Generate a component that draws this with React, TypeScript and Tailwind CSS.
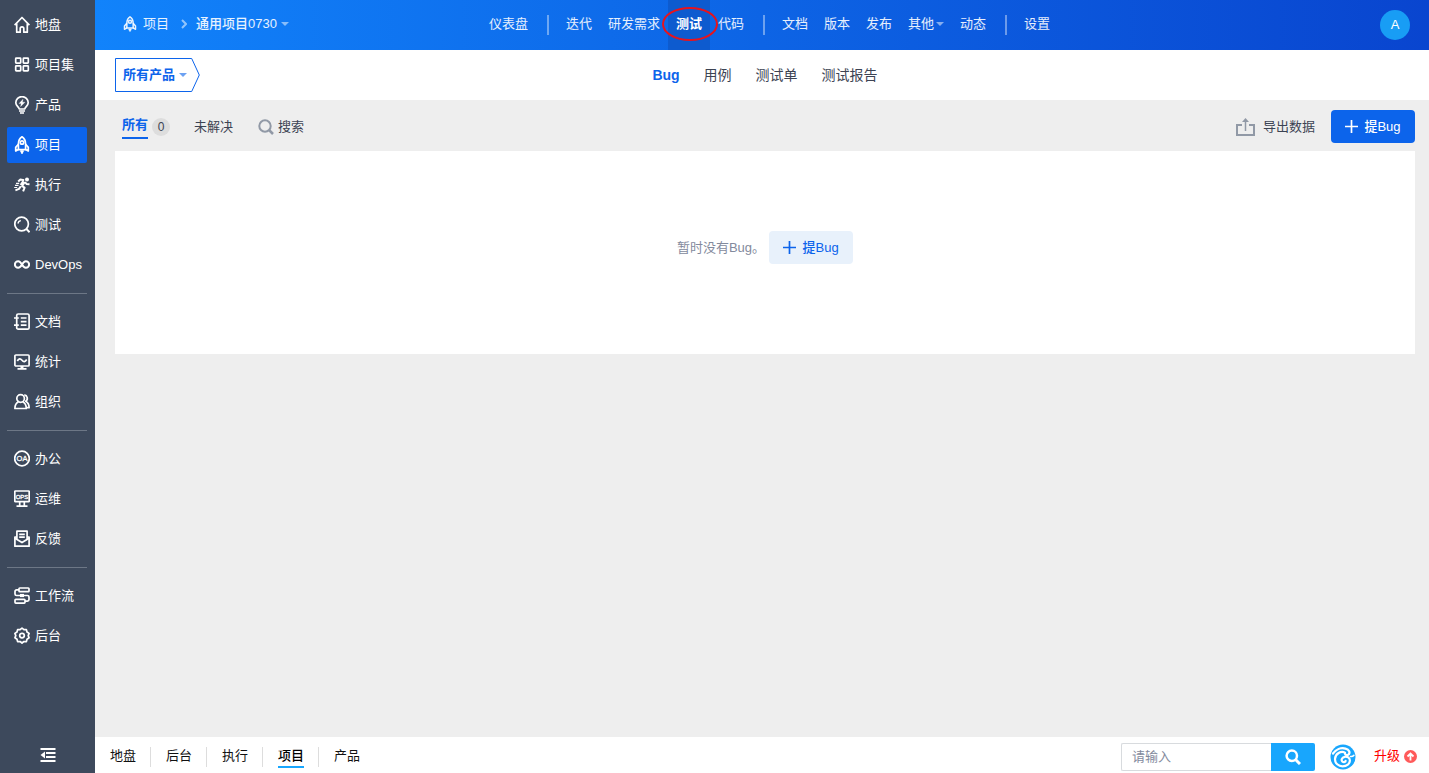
import type { ReactNode } from "react";
import clsx from "clsx";

const icons: Record<string, ReactNode> = {
  home: (
    <>
      <path d="M.6 9.200 8 1.500l7.400 7.700" />
      <path d="M2.700 7.500v8.700h3.500v-3.600a1.800 1.800 0 0 1 3.600 0v3.600h3.500V7.500" />
    </>
  ),
  grid: (
    <>
      <rect x="1.700" y="2.200" width="5" height="5" rx=".6" />
      <rect x="9.300" y="2.200" width="5" height="5" rx=".6" />
      <rect x="1.700" y="9.800" width="5" height="5" rx=".6" />
      <rect x="9.300" y="9.800" width="5" height="5" rx=".6" />
    </>
  ),
  bulb: (
    <>
      <path d="M5.200 13C5 11 1.800 9.900 1.800 6.800a6.200 6.200 0 0 1 12.400 0c0 3.100-3.200 4.200-3.400 6.200z" />
      <path d="M5 15h6M6 17h4" />
      <path d="M9 3.200 5 7.600h2.200l-.6 3L11 6.200H8.500z" fill="currentColor" strokeWidth=".3" />
    </>
  ),
  rocket: (
    <>
      <path d="M8 .8C5.400 2.500 4.400 5 4.400 8v5.600h7.200V8c0-3-1-5.500-3.600-7.200z" />
      <circle cx="8" cy="6.500" r="1.700" />
      <path d="M4.400 8.200 1.700 11.400V15l2.700-1.500M11.600 8.200l2.700 3.200V15l-2.700-1.500" />
      <path d="M6.300 15.300h3.400M8 15v2.700" strokeWidth="1.900" />
    </>
  ),
  run: (
    <>
      <circle cx="13" cy="3.400" r="2" fill="currentColor" stroke="none" />
      <path d="m10 5.500-2.600 4" strokeWidth="3.800" />
      <path d="M10.200 4.200 6.400 3.600 4.200 5.600M11 6l1.500 2 3 .2M7.600 9.800l3 1.800-1.500 3.700M6.800 10.200 5 12.900l-3.600 1.500" strokeWidth="2" />
      <path d="M2 7.300h3.200M1 9.400h3.500M.2 11.500h3" strokeWidth="1.200" />
    </>
  ),
  search: (
    <>
      <circle cx="7.600" cy="8" r="6.800" />
      <path d="m12.200 12.800 3.400 3.400" strokeWidth="2" />
      <path d="M3.900 7.500a3.800 3.800 0 0 1 2.900-3" strokeWidth="1.400" />
    </>
  ),
  infinity: (
    <path
      d="M8 8.500C6.700 6.200 5.700 5.200 4.200 5.200a3.300 3.300 0 0 0 0 6.600c1.500 0 2.500-1 3.800-3.300s2.300-3.300 3.800-3.300a3.300 3.300 0 0 1 0 6.600c-1.500 0-2.500-1-3.800-3.300z"
      strokeWidth="2"
    />
  ),
  doc: (
    <>
      <rect x="2.700" y="1" width="12.400" height="15.200" rx="1.500" />
      <path d="M0 5h4.800M0 12.200h4.800M6.800 5h5.700M6.800 8.600h5.700M6.800 12.200h5.700" />
    </>
  ),
  stat: (
    <>
      <rect x=".9" y="2" width="14.200" height="11" rx="1" />
      <path d="M3.300 8c1.600-2.600 3.100-2.600 4.700-.7s3.100 1.700 4.700-.8M3.500 15.800h9" />
      <path d="M8 13v2.500" strokeWidth="3" />
    </>
  ),
  org: (
    <>
      <circle cx="6.600" cy="5.500" r="3.800" />
      <path d="M4.500 8.800C2.100 10 .9 12.200.9 15.500h11.400c0-3.300-1.200-5.500-3.600-6.700" />
      <path d="M10.300 1.900a3.500 3.500 0 0 1 1.400 6.400c2.200 1.200 3.400 3.300 3.400 6.400H13" />
    </>
  ),
  oa: (
    <>
      <circle cx="8" cy="8.500" r="7.300" />
      <text x="8" y="11.200" textAnchor="middle" fontSize="7.500" fill="currentColor" stroke="currentColor" strokeWidth=".3">OA</text>
    </>
  ),
  ops: (
    <>
      <rect x=".8" y="1" width="14.400" height="10.600" rx=".6" />
      <path d="M5.700 12v4M10.300 12v4M2.500 16.200h11" />
      <text x="8" y="8.800" textAnchor="middle" fontSize="6" fill="currentColor" stroke="currentColor" strokeWidth=".3">OPS</text>
    </>
  ),
  feedback: (
    <>
      <path d="M2.900 7H.9v9.200h14.200V7h-2" />
      <path d="M2.900 9.400V1.200h10.200v8.200M.9 8.300 8 12.600l7.100-4.300M5.200 4.300h5.600M5.200 7.200h5.600" />
    </>
  ),
  flow: (
    <>
      <rect x="5" y="1" width="10" height="3.700" rx=".8" />
      <rect x="1" y="12.400" width="10" height="3.700" rx=".8" />
      <path d="M5 2.900H2.600A1.600 1.600 0 0 0 1 4.500v2.400a1.600 1.600 0 0 0 1.600 1.600h10.800a1.600 1.600 0 0 1 1.600 1.600v2.500a1.600 1.600 0 0 1-1.600 1.600H11" />
      <path d="M6 8.500h4" strokeWidth="3.200" />
    </>
  ),
  gear: (
    <>
      <path d="m8 1.100 1.900 1.600 2.500-.1.600 2.400 2.100 1.400-.9 2.200.9 2.200-2.100 1.400-.6 2.400-2.500-.1L8 16l-1.900-1.500-2.500.1-.6-2.400-2.100-1.400.9-2.200-.9-2.200L3 5l.6-2.400 2.500.1z" />
      <circle cx="8" cy="8.600" r="2.300" />
    </>
  ),
};

function Icon({ name, className }: { name: string; className?: string }) {
  return (
    <svg
      viewBox="0 0 16 18"
      className={clsx("shrink-0", className ?? "h-[18px] w-4")}
      fill="none"
      stroke="currentColor"
      strokeWidth="1.700"
      strokeLinejoin="round"
      aria-hidden="true"
    >
      {icons[name]}
    </svg>
  );
}

const sideGroups = [
  [
    ["home", "地盘"],
    ["grid", "项目集"],
    ["bulb", "产品"],
    ["rocket", "项目"],
    ["run", "执行"],
    ["search", "测试"],
    ["infinity", "DevOps"],
  ],
  [
    ["doc", "文档"],
    ["stat", "统计"],
    ["org", "组织"],
  ],
  [
    ["oa", "办公"],
    ["ops", "运维"],
    ["feedback", "反馈"],
  ],
  [
    ["flow", "工作流"],
    ["gear", "后台"],
  ],
];

const navGroups = [
  ["仪表盘"],
  ["迭代", "研发需求", "测试", "代码"],
  ["文档", "版本", "发布", "其他", "动态"],
  ["设置"],
];

const subTabs = ["Bug", "用例", "测试单", "测试报告"];
const openedApps = ["地盘", "后台", "执行", "项目", "产品"];

function Caret({ className }: { className?: string }) {
  return (
    <svg viewBox="0 0 8 4" className={clsx("h-1 w-2 shrink-0", className)} fill="currentColor" aria-hidden="true">
      <path d="M0 0h8L4 4z" />
    </svg>
  );
}

function Plus() {
  return (
    <svg viewBox="0 0 13 13" className="h-[13px] w-[13px]" stroke="currentColor" strokeWidth="1.700" aria-hidden="true">
      <path d="M6.500 0v13M0 6.500h13" />
    </svg>
  );
}

function Sidebar() {
  return (
    <aside className="flex w-[95px] shrink-0 flex-col bg-[#3d495c] pt-[7px] text-white">
      <nav className="flex-1 pr-2 pl-[7px]">
        {sideGroups.map((group, i) => (
          <ul
            key={i}
            className={clsx("flex flex-col gap-1", i > 0 && "mt-[10px] border-t border-[#6d7786] pt-[10px]")}
          >
            {group.map(([icon, label]) => (
              <li key={label}>
                <a
                  href="#"
                  className={clsx(
                    "flex h-9 items-center gap-[5px] rounded-xs pl-[7px] whitespace-nowrap",
                    label === "项目" && "bg-[#0c64eb]",
                  )}
                >
                  <Icon name={icon} />
                  <span className="pb-px">{label}</span>
                </a>
              </li>
            ))}
          </ul>
        ))}
      </nav>
      <button type="button" aria-label="收起菜单" className="flex h-9 items-center justify-center">
        <svg viewBox="0 0 16 14" className="h-[14px] w-4" fill="none" stroke="currentColor" strokeWidth="2">
          <path d="M.5 1h15M6 5h9.500M6 9h9.500M.5 13h15" />
          <path d="M5 3.500v7L.5 7z" fill="currentColor" stroke="none" />
        </svg>
      </button>
    </aside>
  );
}

function Header() {
  return (
    <header className="flex h-[50px] items-center bg-linear-to-r/srgb from-[#1183fb] to-[#0945cf] pr-[13px] pl-7 text-white/90">
      <div className="flex flex-1 items-center pb-0.5 whitespace-nowrap">
        <a href="#" className="flex items-center gap-1.5">
          <Icon name="rocket" className="h-4 w-[14px]" />
          项目
        </a>
        <svg viewBox="0 0 6 10" className="mr-[9px] ml-3 h-[10px] w-1.5 opacity-60" fill="none" stroke="currentColor" strokeWidth="2">
          <path d="m1 1 4 4-4 4" />
        </svg>
        <button type="button" className="flex items-center gap-1 font-medium">
          通用项目0730
          <Caret className="text-white/50" />
        </button>
      </div>
      <nav className="flex items-center whitespace-nowrap">
        {navGroups.map((group, i) => (
          <div key={i} className="flex items-center">
            {i > 0 && <span className="mr-[9px] ml-[11px] h-5 w-0.5 bg-white/40" />}
            {group.map((label) => (
              <a
                key={label}
                href="#"
                className={clsx(
                  "relative flex h-[50px] items-center px-2 pb-0.5",
                  label === "测试" && "z-10 bg-[#0d5bcf] font-bold text-white",
                )}
              >
                {label}
                {label === "其他" && <Caret className="ml-0.5 text-white/50" />}
                {label === "测试" && (
                  <svg
                    viewBox="0 0 56 34"
                    className="pointer-events-none absolute top-[7px] -left-[6px] h-[34px] w-14"
                    fill="none"
                    stroke="#e8131c"
                    strokeWidth="2"
                  >
                    <ellipse cx="28" cy="17" rx="27" ry="16" />
                  </svg>
                )}
              </a>
            ))}
          </div>
        ))}
      </nav>
      <div className="flex flex-1 justify-end">
        <button type="button" className="mr-1.5 h-[30px] w-[30px] rounded-full bg-[#189df5] text-white">
          A
        </button>
      </div>
    </header>
  );
}

function SubNav() {
  return (
    <div className="flex h-[50px] items-center bg-white pr-[14px] pl-5">
      <div className="flex-1">
        <button
          type="button"
          className="relative flex h-[34px] w-[85px] items-center gap-1 pb-px pl-2 font-bold whitespace-nowrap text-[#0c64eb]"
        >
          <svg viewBox="0 0 85 34" className="absolute inset-0 h-full w-full" fill="none" stroke="currentColor">
            <path d="M.5.5h76.200L84.300 17l-7.600 16.500H.5z" />
          </svg>
          所有产品
          <Caret className="opacity-60" />
        </button>
      </div>
      <nav className="flex gap-6 text-[14px] whitespace-nowrap text-[#3c4353]">
        {subTabs.map((tab) => (
          <a key={tab} href="#" className={clsx(tab === "Bug" && "font-bold text-[#0c64eb]")}>
            {tab}
          </a>
        ))}
      </nav>
      <div className="flex-1" />
    </div>
  );
}

function Toolbar() {
  return (
    <div className="flex h-[51px] items-center justify-between pt-0.5 whitespace-nowrap text-[#3c4353]">
      <div className="flex items-center pl-[7px]">
        <a href="#" className="flex items-center gap-1">
          <span className="border-b-2 border-[#0c64eb] pb-0.5 font-bold text-[#0c64eb]">所有</span>
          <span className="h-[18px] w-[18px] rounded-full bg-[#ddd] text-center text-[12px] leading-[18px]">0</span>
        </a>
        <a href="#" className="ml-6">
          未解决
        </a>
        <button type="button" className="ml-[25px] flex items-center gap-1">
          <svg viewBox="0 0 16 16" className="h-4 w-4 text-[#9199a6]" fill="none" stroke="currentColor" strokeWidth="2">
            <circle cx="7" cy="7" r="5.700" />
            <path d="m11 11 4 4" strokeWidth="2.500" />
          </svg>
          搜索
        </button>
      </div>
      <div className="flex items-center gap-4">
        <button type="button" className="flex items-center gap-2">
          <svg viewBox="0 0 19 18" className="h-[18px] w-[19px] text-[#9199a6]" fill="none" stroke="currentColor" strokeWidth="2">
            <path d="M6 7H1v10h17V7h-5" />
            <path d="M9.500 13V2" strokeWidth="1.500" />
            <path d="M9.500 0 6 4h7z" fill="currentColor" stroke="none" />
          </svg>
          导出数据
        </button>
        <button
          type="button"
          className="flex h-[33px] w-[84px] items-center justify-center gap-1.5 rounded bg-[#0c64eb] font-medium text-white"
        >
          <Plus />
          提Bug
        </button>
      </div>
    </div>
  );
}

function Footer() {
  return (
    <footer className="flex h-9 items-center justify-between bg-white whitespace-nowrap">
      <nav className="flex items-center pt-1 text-[#111]">
        {openedApps.map((app, i) => (
          <div key={app} className={clsx("flex h-5 items-center pr-[14px] pl-[15px]", i > 0 && "border-l border-[#ddd]")}>
            <a
              href="#"
              className={clsx(
                "border-b-2",
                app === "项目" ? "border-[#18a6fd] font-medium text-black" : "border-transparent",
              )}
            >
              {app}
            </a>
          </div>
        ))}
      </nav>
      <div className="flex items-center pt-1 pr-3">
        <form className="flex h-7">
          <input
            type="text"
            aria-label="搜索"
            placeholder="请输入"
            className="w-[150px] rounded-l-xs border border-r-0 border-[#d8dbde] px-[10px] outline-none placeholder:text-[#838a9d]"
          />
          <button type="button" aria-label="搜索" className="flex w-11 items-center justify-center rounded-r-xs bg-[#18a6fd] text-white">
            <svg viewBox="0 0 16 16" className="h-4 w-4" fill="none" stroke="currentColor" strokeWidth="2.500">
              <circle cx="6.800" cy="6.800" r="5.200" />
              <path d="m10.500 10.500 4.500 4.500" strokeWidth="3" />
            </svg>
          </button>
        </form>
        <a href="#" aria-label="禅道" className="ml-[15px]">
          <svg viewBox="0 0 26 26" className="h-[26px] w-[26px]" fill="none" stroke="#fff" strokeLinecap="round">
            <circle cx="13" cy="13" r="12.500" fill="#18a6fd" stroke="none" />
            <path d="M3 9.500C6 5.500 11 3.300 15.500 4.600c3.600 1 5.200 4.200 2.900 6-1.600 1.200-3.600.2-3.400-1.400" strokeWidth="2.200" />
            <path d="M15 8.600C11 6.500 5.200 9.500 5 15c-.1 4.400 3.500 7.300 7.600 7.300 4.200 0 7.300-2.600 7.300-5.700 0-2.900-2.700-4.300-5.200-3.800-2.900.6-3.900 3.500-2.200 4.900 1.300 1 3 .3 3.100-.9" strokeWidth="2.200" />
            <path d="M20.500 12.500c1.300.2 2.600-.2 3.400-1.200" strokeWidth="1.600" />
          </svg>
        </a>
        <a href="#" className="ml-[18px] flex items-center gap-1 pb-0.5 text-[#f00]">
          升级
          <svg viewBox="0 0 13 13" className="h-[13px] w-[13px]" aria-hidden="true">
            <circle cx="6.500" cy="6.500" r="6.500" fill="#ff5a5a" />
            <path d="M6.500 10.500V4M3.500 6.500l3-3 3 3" fill="none" stroke="#fff" strokeWidth="1.800" />
          </svg>
        </a>
      </div>
    </footer>
  );
}

export default function App() {
  return (
    <div className="flex min-h-screen bg-[#eee] font-['Liberation_Sans','Noto_Sans_CJK_SC',sans-serif] text-[13px] leading-5">
      <Sidebar />
      <div className="flex min-w-0 flex-1 flex-col">
        <Header />
        <SubNav />
        <main className="flex-1 pr-[14px] pl-5">
          <Toolbar />
          <section className="flex items-center justify-center gap-1 bg-white pt-20 pb-[90px] text-[#838a9d]">
            <p>暂时没有Bug。</p>
            <button
              type="button"
              className="flex h-[33px] w-[84px] items-center justify-center gap-1.5 rounded bg-[#e8f1fb] font-medium text-[#0c64eb]"
            >
              <Plus />
              提Bug
            </button>
          </section>
        </main>
        <Footer />
      </div>
    </div>
  );
}
